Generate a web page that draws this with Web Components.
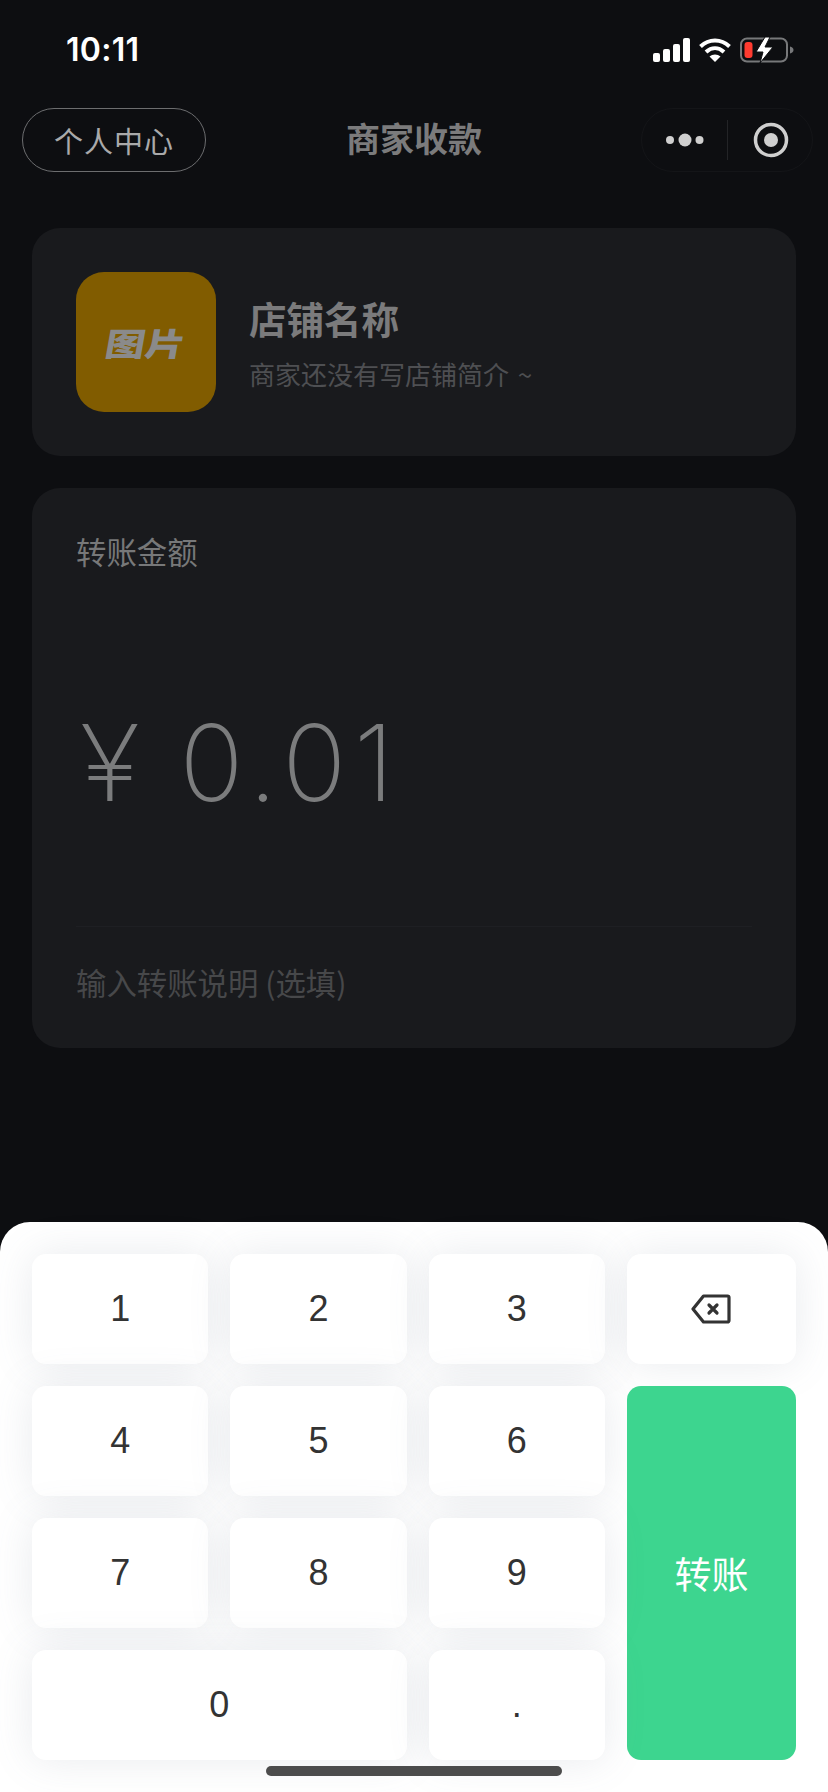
<!DOCTYPE html>
<html lang="zh">
<head>
<meta charset="utf-8">
<title>商家收款</title>
<style>
  html, body { margin: 0; padding: 0; background: #0d0e11; }
  body { font-family: "Liberation Sans", "Noto Sans CJK SC", sans-serif; }
</style>
</head>
<body>
<pay-app></pay-app>
<script>
const CJK = '"Noto Sans CJK SC", sans-serif';

class StatusBar extends HTMLElement {
  connectedCallback() {
    this.attachShadow({ mode: 'open' });
    this.shadowRoot.innerHTML = `
      <style>
        :host { display: flex; justify-content: space-between; align-items: center; height: 100px; padding: 0 34px 0 66px; box-sizing: border-box; color: #fff; }
        .time { font: 600 32px/1 Inter, "Liberation Sans", sans-serif; letter-spacing: .3px; }
        .icons { display: flex; align-items: center; gap: 10px; }
        .signal { margin-right: -1px; }
        svg { display: block; }
      </style>
      <span class="time">10:11</span>
      <div class="icons">
        <svg class="signal" width="37" height="24" viewBox="0 0 37 24" fill="#fff">
          <rect x="0" y="15" width="7" height="9" rx="2"/>
          <rect x="10" y="11" width="7" height="13" rx="2"/>
          <rect x="20" y="6" width="7" height="18" rx="2"/>
          <rect x="30" y="0" width="7" height="24" rx="2"/>
        </svg>
        <svg width="32" height="24" viewBox="0 0 32 24" fill="none" stroke="#fff" stroke-width="4">
          <path d="M1.500 8.500C10 .5 22 .5 30.500 8.500"/>
          <path d="M7 14c5.500-5 12.500-5 18 0"/>
          <path d="M16 24l-5.500-5.500c3-2.800 8-2.800 11 0z" fill="#fff" stroke="none"/>
        </svg>
        <svg width="54" height="26" viewBox="0 0 54 26" style="margin-left:-1px">
          <rect x="1" y="1.500" width="46" height="23" rx="6" fill="none" stroke="#77787a" stroke-width="2"/>
          <rect x="4.500" y="5" width="8" height="16" rx="3" fill="#ff3b30"/>
          <path d="M50 9.500c2 .4 3.500 1.800 3.500 3.500s-1.500 3.100-3.500 3.500z" fill="#77787a"/>
          <path d="M25 0L16 15h7l-3 11 13-16h-8l5-10z" fill="#fff" stroke="#0d0e11" stroke-width="1"/>
        </svg>
      </div>
    `;
  }
}

class NavBar extends HTMLElement {
  connectedCallback() {
    this.attachShadow({ mode: 'open' });
    this.shadowRoot.innerHTML = `
      <style>
        :host { display: grid; grid-template-columns: 1fr auto 1fr; align-items: center; padding: 8px 15px 0 22px; height: 64px; box-sizing: content-box; font-family: ${CJK}; }
        .pill { justify-self: start; width: 184px; height: 64px; box-sizing: border-box; border: 1px solid #6c6d6f; border-radius: 32px; color: #a9a9aa; font-size: 29px; display: flex; align-items: center; justify-content: center; letter-spacing: 1px; }
        .title { color: #7b7b7c; font-size: 34px; font-weight: 700; line-height: 44px; margin: 0 7px 4px 0; }
        .capsule { justify-self: end; display: flex; align-items: center; width: 172px; height: 64px; box-sizing: border-box; border: 1px solid #141518; border-radius: 32px; }
        .cell { flex: 1; display: flex; justify-content: center; align-items: center; }
        .cell.left { flex: 0 0 85px; }
        .cell.right { padding-left: 2px; }
        .sep { width: 1px; height: 40px; background: #232427; }
        svg { display: block; }
      </style>
      <span class="pill">个人中心</span>
      <span class="title">商家收款</span>
      <div class="capsule">
        <div class="cell left">
          <svg width="38" height="14" viewBox="0 0 38 14" fill="#cfcfcf"><circle cx="4" cy="7" r="4"/><circle cx="19" cy="7" r="6.500"/><circle cx="33.500" cy="7" r="4"/></svg>
        </div>
        <div class="sep"></div>
        <div class="cell right">
          <svg width="36" height="36" viewBox="0 0 36 36"><circle cx="18" cy="18" r="15.500" fill="none" stroke="#cfcfcf" stroke-width="3.500"/><circle cx="18" cy="18" r="7" fill="#cfcfcf"/></svg>
        </div>
      </div>
    `;
  }
}

class ShopCard extends HTMLElement {
  connectedCallback() {
    this.attachShadow({ mode: 'open' });
    this.shadowRoot.innerHTML = `
      <style>
        :host { display: flex; align-items: center; gap: 33px; height: 228px; padding: 0 44px; box-sizing: border-box; background: #191a1d; border-radius: 28px; font-family: ${CJK}; }
        .thumb { flex: none; width: 140px; height: 140px; border-radius: 28px; background: #815c00; display: flex; align-items: center; justify-content: center; color: #8a8a8a; }
        .thumb span { font-size: 40px; font-weight: 900; line-height: 1; transform: skewX(-10deg) scaleY(.8); }
        .info { display: flex; flex-direction: column; gap: 13px; }
        .name { color: #7b7b7c; font-size: 37.500px; font-weight: 700; line-height: 50px; }
        .desc { color: #4e4f52; font-size: 26px; line-height: 36px; word-spacing: 3px; }
      </style>
      <div class="thumb"><span>图片</span></div>
      <div class="info">
        <span class="name"><slot name="name"></slot></span>
        <span class="desc"><slot name="desc"></slot></span>
      </div>
    `;
  }
}

class AmountCard extends HTMLElement {
  connectedCallback() {
    this.attachShadow({ mode: 'open' });
    this.shadowRoot.innerHTML = `
      <style>
        :host { display: block; height: 560px; padding: 0 44px; box-sizing: border-box; background: #191a1d; border-radius: 28px; font-family: ${CJK}; }
        .label { height: 130px; padding-top: 42px; box-sizing: border-box; color: #777879; font-size: 30.400px; line-height: 42px; }
        .amount { height: 309px; box-sizing: border-box; padding-top: 81px; border-bottom: 1px solid #1e1f23; color: #7b7c7d; font: 200 106px/1.200 Inter, sans-serif; white-space: pre; display: flex; gap: 43px; }
        .amount .yen { margin-left: 4px; transform: scaleX(1.06); transform-origin: left center; }
        .amount .num { letter-spacing: 7.500px; }
        .note { color: #47484a; font-size: 30.400px; line-height: 42px; padding-top: 34px; }
      </style>
      <div class="label">转账金额</div>
      <div class="amount"><span class="yen">¥</span><span class="num">0.01</span></div>
      <div class="note">输入转账说明 (选填)</div>
    `;
  }
}

class KeyButton extends HTMLElement {
  connectedCallback() {
    this.attachShadow({ mode: 'open' });
    this.shadowRoot.innerHTML = `
      <style>
        :host { display: flex; align-items: center; justify-content: center; background: #fff; border-radius: 14px; color: #333; font: 36px/1 "Liberation Sans", ${CJK}; box-shadow: 0 0 42px rgba(110, 120, 140, .15); }
        :host([primary]) { background: #3dd58f; color: #fff; font-size: 37px; box-shadow: none; font-family: ${CJK}; }
      </style>
      <slot></slot>
    `;
  }
}

class KeyPad extends HTMLElement {
  connectedCallback() {
    this.attachShadow({ mode: 'open' });
    this.shadowRoot.innerHTML = `
      <style>
        :host { display: grid; grid-template-columns: repeat(3, 1fr) 169px; grid-auto-rows: 110px; gap: 22px; padding: 32px 32px 32px; background: #fff; border-radius: 30px 30px 0 0; }
        ::slotted(.zero) { grid-column: span 2; }
        ::slotted(.pay) { grid-column: 4; grid-row: 2 / span 3; }
      </style>
      <slot></slot>
    `;
  }
}

class PayApp extends HTMLElement {
  connectedCallback() {
    this.attachShadow({ mode: 'open' });
    this.shadowRoot.innerHTML = `
      <style>
        :host { display: flex; flex-direction: column; position: relative; width: 828px; height: 1792px; overflow: hidden; background: #0d0e11; }
        .cards { display: flex; flex-direction: column; gap: 32px; padding: 56px 32px 0; }
        key-pad { margin-top: auto; }
        .home { position: absolute; left: 266px; bottom: 16px; width: 296px; height: 10px; border-radius: 5px; background: #4c4c4c; }
      </style>
      <status-bar></status-bar>
      <nav-bar></nav-bar>
      <div class="cards">
        <shop-card>
          <span slot="name">店铺名称</span>
          <span slot="desc">商家还没有写店铺简介 ~</span>
        </shop-card>
        <amount-card></amount-card>
      </div>
      <key-pad>
        <key-button>1</key-button>
        <key-button>2</key-button>
        <key-button>3</key-button>
        <key-button>
          <svg width="40" height="30" viewBox="0 0 40 30" fill="none" stroke="#333" stroke-width="3.200" stroke-linejoin="round" stroke-linecap="round">
            <path d="M12.500 2H36.500a1.500 1.500 0 0 1 1.500 1.500V26.500a1.500 1.500 0 0 1-1.500 1.500H12.500L2 15z"/>
            <path d="M18 11l8 8M26 11l-8 8"/>
          </svg>
        </key-button>
        <key-button>4</key-button>
        <key-button>5</key-button>
        <key-button>6</key-button>
        <key-button class="pay" primary>转账</key-button>
        <key-button>7</key-button>
        <key-button>8</key-button>
        <key-button>9</key-button>
        <key-button class="zero">0</key-button>
        <key-button>.</key-button>
      </key-pad>
      <div class="home"></div>
    `;
  }
}

customElements.define('status-bar', StatusBar);
customElements.define('nav-bar', NavBar);
customElements.define('shop-card', ShopCard);
customElements.define('amount-card', AmountCard);
customElements.define('key-button', KeyButton);
customElements.define('key-pad', KeyPad);
customElements.define('pay-app', PayApp);
</script>
</body>
</html>
